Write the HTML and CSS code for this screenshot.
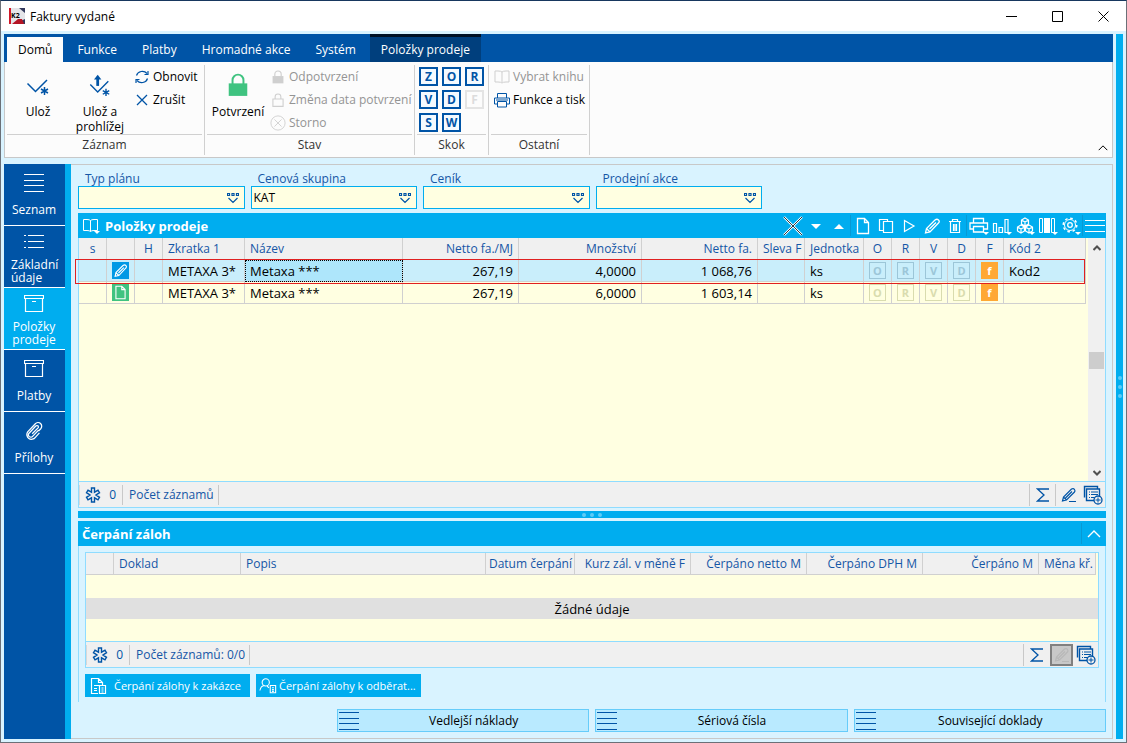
FILE: index.html
```html
<!DOCTYPE html>
<html lang="cs">
<head>
<meta charset="utf-8">
<title>Faktury vydané</title>
<link rel="stylesheet" href="styles.css">
</head>
<body>
<svg class="sprite" aria-hidden="true">
  <symbol id="i-check" viewBox="0 0 24 24"><path d="M1.500 10.500l8 8L21 7" stroke-width="1.500"/><path d="M18.500 14v8M15 16l7 4M22 16l-7 4" stroke-width="1.500"/></symbol>
  <symbol id="i-checkup" viewBox="0 0 24 26"><path d="M1.500 12.500l8 8L21 9M18.500 17v8M15 19l7 4M22 19l-7 4" stroke-width="1.500"/><path d="M9.500 14V5" stroke-width="3"/><path d="M5.500 7l4-5 4 5z" fill="currentColor" stroke="none"/></symbol>
  <symbol id="i-refresh" viewBox="0 0 14 14"><path d="M1.500 5.500a6 5.500 0 0 1 10.500-2M13 1v3.500H9.500M12.500 8.500a6 5.500 0 0 1-10.500 2M1 13V9.500h3.500" stroke-width="1.200"/></symbol>
  <symbol id="i-x" viewBox="0 0 14 14"><path d="M2 2l10 10M12 2L2 12" stroke-width="1.300"/></symbol>
  <symbol id="i-lock" viewBox="0 0 20 22"><path d="M5 10V6.500a5 5 0 0 1 10 0V10" stroke-width="1.800"/><path d="M1.500 9.500h17V21h-17z" fill="currentColor" stroke="none"/></symbol>
  <symbol id="i-lockopen" viewBox="0 0 20 22"><path d="M5.500 9V6a4.500 4.500 0 0 1 9 0v3M2 9.500h16V21H2z" stroke-width="1.700"/></symbol>
  <symbol id="i-cancel" viewBox="0 0 18 18"><circle cx="9" cy="9" r="8"/><path d="M5 5l8 8M13 5l-8 8"/></symbol>
  <symbol id="i-book" viewBox="0 0 16 16"><path d="M8 3v10M8 3Q7 2 4 2H1v11h3q3 0 4 1 1-1 4-1h3V2h-3Q9 2 8 3z"/></symbol>
  <symbol id="i-bookmenu" viewBox="0 0 18 18"><path d="M8.500 3.500v11M8.500 3.500Q7.500 2.500 5 2.500H1.500v11H5q2.500 0 3.500 1 1-1 3.500-1h3.500v-11H12q-2.500 0-3.500 1z"/><path d="M12 14h6l-3 3z" fill="currentColor" stroke="none"/></symbol>
  <symbol id="i-printer" viewBox="0 0 18 16"><path d="M4.500 6V1.500h9V6M4.500 12H1.500V6h15v6h-3M4.500 9.500h9V15h-9zM3 8h12"/></symbol>
  <symbol id="i-list" viewBox="0 0 20 18"><path d="M0 .5h20M0 6.500h20M0 11.500h20M0 17.500h20"/></symbol>
  <symbol id="i-bullets" viewBox="0 0 20 18"><path d="M4 2.500h16M4 8.500h16M4 14.500h16M0 2.500h2M0 8.500h2M0 14.500h2"/></symbol>
  <symbol id="i-box" viewBox="0 0 20 18"><path d="M.5.500h19v3H.5zM1.500 4v12.500h17V4M8 6.500h4" stroke-width="1.200"/></symbol>
  <symbol id="i-clip" viewBox="0 0 20 20"><path d="M15 9l-6.500 7a2.500 2.500 0 0 1-4-3.500L12 4.500a1.500 1.500 0 0 1 2.500 2L8 13M16 12l-4.500 5A5 5 0 0 1 3 11l8.500-9a4 4 0 0 1 6 5.500L15 10" stroke-width="1.400"/></symbol>
  <symbol id="i-drop" viewBox="0 0 12 11"><path d="M.5.500h2v2h-2zM5 .5h2v2H5zM9.500.500h2v2h-2zM1.500 5L6 9.500 10.500 5" stroke-width="1.200"/></symbol>
  <symbol id="i-page" viewBox="0 0 16 18"><path d="M2.500 1.500h7l4 4v11h-11zM9.500 1.500v4h4" stroke-width="1.300"/></symbol>
  <symbol id="i-copy" viewBox="0 0 16 18"><path d="M5.500 4.500h9v11h-9zM5.500 13.500H1.500v-11H9.500v2" stroke-width="1.200"/></symbol>
  <symbol id="i-play" viewBox="0 0 16 18"><path d="M3.500 3.500l9.500 5.500-9.500 5.500z" stroke-width="1.200"/></symbol>
  <symbol id="i-pencil" viewBox="0 0 16 18"><path d="M1.500 16l1-4.500L11 3q2-1.500 3.500 0t0 3L6 15zM2.500 11.500L6 15M5.500 12L12 5.500" stroke-width="1.300"/></symbol>
  <symbol id="i-trash" viewBox="0 0 16 18"><path d="M2 4.500h12M5.500 4V2.500h5V4M3.500 5v10.500h9V5M6.500 7v7M8 7v7M9.500 7v7" stroke-width="1.200"/></symbol>
  <symbol id="i-toolprint" viewBox="0 0 20 20"><path d="M4.500 7V2.500h10V7M4.500 13H1V7h17.500v6h-4M4.500 10.500h10V16h-10z" stroke-width="1.300"/><path d="M14 16h6l-3 3z" fill="currentColor" stroke="none"/></symbol>
  <symbol id="i-chart" viewBox="0 0 20 20"><path d="M1.500 7.500h3v9h-3zM7 11.500h3.500v5H7zM13 3.500h3v13h-3z" stroke-width="1.200"/><path d="M14 16h6l-3 3z" fill="currentColor" stroke="none"/></symbol>
  <symbol id="i-cubes" viewBox="0 0 20 20"><path d="M10 2l3.500 2v4L10 10 6.500 8V4zM6 9l3.500 2v4L6 17l-3.500-2v-4zM14 9l3.500 2v4L14 17l-3.500-2v-4zM6.500 4L10 6l3.500-2M10 6v4M2.500 11L6 13l3.500-2M6 13v4M10.500 11l3.500 2 3.500-2M14 13v4" stroke-width="1.200"/><path d="M14 16h6l-3 3z" fill="currentColor" stroke="none"/></symbol>
  <symbol id="i-cols" viewBox="0 0 20 20"><path d="M1.500 2.500h3v14h-3zM13.500 2.500h3v14h-3z"/><path d="M6 2h6v15H6zM14 16h6l-3 3z" fill="currentColor" stroke="none"/></symbol>
  <symbol id="i-gear" viewBox="0 0 20 20"><circle cx="9" cy="9" r="5.500"/><circle cx="9" cy="9" r="2.300" stroke-width="1.300"/><circle cx="9" cy="9" r="6.800" stroke-dasharray="2.600 2.740" stroke-width="1.500"/><path d="M14 16h6l-3 3z" fill="currentColor" stroke="none"/></symbol>
  <symbol id="i-menu" viewBox="0 0 20 20"><path d="M0 4.500h20M0 9.500h20M0 15.500h20"/></symbol>
  <symbol id="i-ast" viewBox="0 0 16 16"><path d="M6.500 1h3v4.200L13 3.200l1.500 2.500L11 8l3.500 2.300-1.500 2.500-3.500-2V15h-3v-4.200L3 12.800l-1.500-2.500L5 8 1.500 5.700 3 3.200l3.500 2z" stroke-width="1.400"/></symbol>
  <symbol id="i-sum" viewBox="0 0 14 14"><path d="M13 1H1.500L8 7l-6.500 6H13" stroke-width="1.300"/></symbol>
  <symbol id="i-edit" viewBox="0 0 16 16"><path d="M1.500 14l1-4L10.500 2q2-1 3 .5t0 2.500L5.500 13zM2.500 10l3 3M4.500 11L11 4.500M8 14.500h7" stroke-width="1.200"/></symbol>
  <symbol id="i-addlist" viewBox="0 0 20 20"><path d="M3.500 4h13v11.500h-13zM1.500 12.500v-11h13v2" stroke-width="1.400"/><path d="M6 7h1M8 7h7M6 9.500h1M8 9.500h7M6 12.500h1M8 12.500h4"/><circle cx="15" cy="15" r="4" fill="#f0f0f0" stroke-width="1.300"/><path d="M15 12.500v5M12.500 15h5"/></symbol>
  <symbol id="i-up" viewBox="0 0 14 8"><path d="M1 7l6-6 6 6" stroke-width="1.400"/></symbol>
  <symbol id="i-doccalc" viewBox="0 0 18 18"><path d="M8 16.500H1.500v-15h7l4 4V8M8.500 1.500v4h4M4 8.500h5M4 11.500h3M4 13.500h3M9.500 8.500h6v8h-6zM11.500 11h2M11.500 13h2M11.500 15h2" stroke-width="1.200"/></symbol>
  <symbol id="i-person" viewBox="0 0 20 18"><circle cx="7.500" cy="5" r="4" stroke-width="1.200"/><path d="M1 14q1-5 5-5.500M9 9l2 2M12.500 8.500h6v8h-6zM14.500 11h2M14.500 13h2M14.500 15h2" stroke-width="1.200"/></symbol>
</svg>

<div class="window">
  <header class="titlebar">
    <svg class="logo" viewBox="0 0 16 16" aria-hidden="true"><path d="M0 0h16v16H0z" fill="#e4e4e8"/><path d="M0 0h2v16H0z" fill="#d01828"/><path d="M10 0h6v5zM16 11v5H5z" fill="#33395c"/><path d="M3 16l6-5 4 0 2 5z" fill="#b41424"/><text x="2" y="10" font-size="7" font-weight="bold">K2</text></svg>
    <h1>Faktury vydané</h1>
    <div class="winbtns">
      <button aria-label="Minimalizovat"><svg viewBox="0 0 11 11"><path d="M0 5.500h11"/></svg></button>
      <button aria-label="Maximalizovat"><svg viewBox="0 0 11 11"><path d="M.5.500h10v10H.5z"/></svg></button>
      <button aria-label="Zavřít"><svg viewBox="0 0 11 11"><path d="M.5.500l10 10M10.500.500l-10 10"/></svg></button>
    </div>
  </header>

  <div class="frame">
    <div class="content">
      <nav class="tabs">
        <button class="tab active">Domů</button>
        <button class="tab">Funkce</button>
        <button class="tab">Platby</button>
        <button class="tab">Hromadné akce</button>
        <button class="tab">Systém</button>
        <button class="tab context">Položky prodeje</button>
      </nav>
      <section class="ribbon">
        <div class="group g-record">
          <div class="tools">
            <button class="big"><svg class="s24 blue"><use href="#i-check"/></svg><span>Ulož</span></button>
            <button class="big"><svg class="s24 blue"><use href="#i-checkup"/></svg><span>Ulož a prohlížej</span></button>
            <div class="stack">
              <button class="small"><svg class="blue"><use href="#i-refresh"/></svg>Obnovit</button>
              <button class="small"><svg class="blue"><use href="#i-x"/></svg>Zrušit</button>
            </div>
          </div>
          <div class="caption">Záznam</div>
        </div>
        <div class="group g-state">
          <div class="tools">
            <button class="big"><svg class="s24 green"><use href="#i-lock"/></svg><span>Potvrzení</span></button>
            <div class="stack">
              <button class="small" disabled><svg><use href="#i-lock"/></svg>Odpotvrzení</button>
              <button class="small" disabled><svg><use href="#i-lockopen"/></svg>Změna data potvrzení</button>
              <button class="small" disabled><svg class="wide"><use href="#i-cancel"/></svg>Storno</button>
            </div>
          </div>
          <div class="caption">Stav</div>
        </div>
        <div class="group g-jump">
          <div class="tools jumps">
            <button>Z</button><button>O</button><button>R</button>
            <button>V</button><button>D</button><button disabled>F</button>
            <button>S</button><button>W</button>
          </div>
          <div class="caption">Skok</div>
        </div>
        <div class="group g-other">
          <div class="tools">
            <div class="stack">
              <button class="small" disabled><svg class="wide"><use href="#i-book"/></svg>Vybrat knihu</button>
              <button class="small"><svg class="wide blue"><use href="#i-printer"/></svg>Funkce a tisk</button>
            </div>
          </div>
          <div class="caption">Ostatní</div>
        </div>
        <button class="collapse" aria-label="Sbalit"><svg><use href="#i-up"/></svg></button>
      </section>

      <div class="work">
        <nav class="side">
          <button><svg class="i20"><use href="#i-list"/></svg><span>Seznam</span></button>
          <button class="two"><svg class="i20"><use href="#i-bullets"/></svg><span class="left">Základní údaje</span></button>
          <button class="two active"><svg class="i20"><use href="#i-box"/></svg><span>Položky prodeje</span></button>
          <button><svg class="i20"><use href="#i-box"/></svg><span>Platby</span></button>
          <button><svg class="i20"><use href="#i-clip"/></svg><span>Přílohy</span></button>
        </nav>

        <main class="pane">
          <form class="filters">
            <div class="field"><label for="f1">Typ plánu</label><div class="lookup"><input id="f1"><button type="button" aria-label="Vybrat"><svg><use href="#i-drop"/></svg></button></div></div>
            <div class="field"><label for="f2">Cenová skupina</label><div class="lookup"><input id="f2" value="KAT"><button type="button" aria-label="Vybrat"><svg><use href="#i-drop"/></svg></button></div></div>
            <div class="field"><label for="f3">Ceník</label><div class="lookup"><input id="f3"><button type="button" aria-label="Vybrat"><svg><use href="#i-drop"/></svg></button></div></div>
            <div class="field"><label for="f4">Prodejní akce</label><div class="lookup"><input id="f4"><button type="button" aria-label="Vybrat"><svg><use href="#i-drop"/></svg></button></div></div>
          </form>

          <section class="items">
            <div class="bar">
              <svg class="i18"><use href="#i-bookmenu"/></svg>
              <h2>Položky prodeje</h2>
              <div class="toolbar">
                <button aria-label="Zrušit"><svg viewBox="0 0 20 20"><path d="M1 1l18 18M19 1L1 19" stroke-width="2.400"/><path class="ink" d="M1 1l18 18M19 1L1 19"/></svg></button>
                <button aria-label="Dolů"><svg class="s10" viewBox="0 0 10 10"><path d="M0 3h10L5 8z" fill="currentColor" stroke="none"/></svg></button>
                <button aria-label="Nahoru"><svg class="s10" viewBox="0 0 10 10"><path d="M0 8h10L5 3z" fill="currentColor" stroke="none"/></svg></button>
                <button class="sep" aria-label="Nový"><svg class="s16"><use href="#i-page"/></svg></button>
                <button aria-label="Kopie"><svg class="s16"><use href="#i-copy"/></svg></button>
                <button aria-label="Spustit"><svg class="s16"><use href="#i-play"/></svg></button>
                <button aria-label="Změna"><svg class="s16"><use href="#i-pencil"/></svg></button>
                <button aria-label="Smazat"><svg class="s16"><use href="#i-trash"/></svg></button>
                <button class="sep" aria-label="Tisk"><svg><use href="#i-toolprint"/></svg></button>
                <button aria-label="Graf"><svg><use href="#i-chart"/></svg></button>
                <button aria-label="Kostky"><svg><use href="#i-cubes"/></svg></button>
                <button aria-label="Sloupce"><svg><use href="#i-cols"/></svg></button>
                <button aria-label="Nastavení"><svg><use href="#i-gear"/></svg></button>
                <button class="sep" aria-label="Nabídka"><svg><use href="#i-menu"/></svg></button>
              </div>
            </div>
            <div class="gridbox">
              <div class="sheet">
                <table class="grid">
                  <colgroup><col class="c28"><col class="c28"><col class="c28"><col class="c82"><col><col class="c116"><col class="c123"><col class="c116"><col class="c47"><col class="c59"><col class="c28"><col class="c28"><col class="c28"><col class="c28"><col class="c28"><col class="c82"></colgroup>
                  <thead><tr><th class="c">s</th><th></th><th class="c">H</th><th>Zkratka 1</th><th>Název</th><th class="r">Netto fa./MJ</th><th class="r">Množství</th><th class="r">Netto fa.</th><th>Sleva F</th><th>Jednotka</th><th class="c">O</th><th class="c">R</th><th class="c">V</th><th class="c">D</th><th class="c">F</th><th>Kód 2</th></tr></thead>
                  <tbody>
                    <tr class="sel"><td></td><td class="c"><span class="mark edit"><svg><use href="#i-pencil"/></svg></span></td><td></td><td>METAXA 3*</td><td class="focus">Metaxa ***</td><td class="r">267,19</td><td class="r">4,0000</td><td class="r">1 068,76</td><td></td><td>ks</td><td class="c"><b class="flag">O</b></td><td class="c"><b class="flag">R</b></td><td class="c"><b class="flag">V</b></td><td class="c"><b class="flag">D</b></td><td class="c"><b class="flag on">f</b></td><td>Kod2</td></tr>
                    <tr><td></td><td class="c"><span class="mark new"><svg><use href="#i-page"/></svg></span></td><td></td><td>METAXA 3*</td><td>Metaxa ***</td><td class="r">267,19</td><td class="r">6,0000</td><td class="r">1 603,14</td><td></td><td>ks</td><td class="c"><b class="flag">O</b></td><td class="c"><b class="flag">R</b></td><td class="c"><b class="flag">V</b></td><td class="c"><b class="flag">D</b></td><td class="c"><b class="flag on">f</b></td><td></td></tr>
                  </tbody>
                </table>
                <div class="outline"></div>
              </div>
              <div class="scroll">
                <svg viewBox="0 0 8 6"><path d="M.5 5L4 1.500 7.500 5" stroke-width="2"/></svg>
                <span class="thumb"></span>
                <svg viewBox="0 0 8 6"><path d="M.5 1L4 4.500 7.500 1" stroke-width="2"/></svg>
              </div>
            </div>
            <div class="status">
              <span class="cell count"><svg><use href="#i-ast"/></svg>0</span>
              <span class="cell">Počet záznamů</span>
              <span class="actions">
                <button aria-label="Součet"><svg class="s14"><use href="#i-sum"/></svg></button>
                <button class="line" aria-label="Upravit"><svg><use href="#i-edit"/></svg></button>
                <button aria-label="Přidat"><svg class="s20"><use href="#i-addlist"/></svg></button>
              </span>
            </div>
          </section>

          <div class="splitter"><i></i><i></i><i></i></div>

          <section class="advances">
            <div class="bar">
              <h2>Čerpání záloh</h2>
              <button class="fold" aria-label="Sbalit"><svg><use href="#i-up"/></svg></button>
            </div>
            <div class="inner">
              <div class="box">
                <table class="grid">
                  <colgroup><col class="c28"><col class="c127"><col><col class="c89"><col class="c116"><col class="c116"><col class="c116"><col class="c116"><col class="c57"></colgroup>
                  <thead><tr><th></th><th>Doklad</th><th>Popis</th><th class="r tight">Datum čerpání</th><th class="r">Kurz zál. v měně F</th><th class="r">Čerpáno netto M</th><th class="r">Čerpáno DPH M</th><th class="r">Čerpáno M</th><th class="r tight">Měna kř.</th></tr></thead>
                </table>
                <div class="empty">Žádné údaje</div>
                <div class="status">
                  <span class="cell count"><svg><use href="#i-ast"/></svg>0</span>
                  <span class="cell">Počet záznamů: 0/0</span>
                  <span class="actions">
                    <button aria-label="Součet"><svg class="s14"><use href="#i-sum"/></svg></button>
                    <button class="line off" disabled aria-label="Upravit"><svg><use href="#i-edit"/></svg></button>
                    <button aria-label="Přidat"><svg class="s20"><use href="#i-addlist"/></svg></button>
                  </span>
                </div>
              </div>
              <div class="draw">
                <button class="wider"><svg><use href="#i-doccalc"/></svg>Čerpání zálohy k zakázce</button>
                <button><svg><use href="#i-person"/></svg>Čerpání zálohy k odběrat...</button>
              </div>
            </div>
          </section>

          <div class="links">
            <button><svg><use href="#i-list"/></svg><span>Vedlejší náklady</span></button>
            <button><svg><use href="#i-list"/></svg><span>Sériová čísla</span></button>
            <button><svg><use href="#i-list"/></svg><span>Související doklady</span></button>
          </div>
        </main>
      </div>
    </div>
    <aside class="edge"><i></i><i></i><i></i></aside>
  </div>
</div>
</body>
</html>
```

FILE: styles.css
```css
* { box-sizing: border-box; }
body { margin: 0; font: 12px/15px "Open Sans", "Noto Sans", sans-serif; color: #000; }
h1, h2 { margin: 0; font-size: inherit; }
button, input { font: inherit; color: inherit; margin: 0; padding: 0; border: 0; background: none; }
svg { fill: none; stroke: currentColor; flex: none; }
.sprite { position: absolute; width: 0; height: 0; }

.window { height: 100vh; min-height: 600px; display: flex; flex-direction: column; background: #d9f3ff; border: 1px solid #6b7078; border-top-color: #17375e; }
.titlebar { height: 30px; flex: none; display: flex; align-items: center; background: #fff; padding-left: 8px; }
.logo { width: 16px; height: 16px; stroke: none; }
.logo text { fill: #000; font-family: "Open Sans", sans-serif; }
h1 { font-weight: 400; margin-left: 5px; }
.winbtns { margin-left: auto; display: flex; }
.winbtns button { width: 46px; height: 28px; display: flex; align-items: center; justify-content: center; }
.winbtns svg { width: 11px; height: 11px; }

.frame { flex: 1; min-height: 0; display: flex; gap: 3px; padding: 3px; }
.content { flex: 1; min-width: 0; display: flex; flex-direction: column; }
.edge { width: 7px; flex: none; background: #00adef; display: flex; flex-direction: column; align-items: center; justify-content: center; gap: 5px; }
.edge i, .splitter i { width: 4px; height: 4px; border-radius: 2px; background: #5ccbf7; }

.tabs { height: 28px; flex: none; display: flex; gap: 3px; background: #0054a6; color: #fff; padding-left: 3px; }
.tab { padding: 3px 11px 0; }
.tab.active { margin-top: 3px; padding: 0 11px; background: #fcfcfc; color: #000; }
.tab.context { padding-top: 0; background: #003f7d; border-top: 3px solid #001226; }

.ribbon { height: 96px; flex: none; position: relative; display: flex; background: #fcfcfc; border: 1px solid #c8c8c8; border-top: 0; }
.group { display: flex; flex-direction: column; margin: 3px 0 2px; padding: 0 2px; border-right: 1px solid #d0d0d0; }
.g-record { width: 200px; }
.g-state { width: 210px; }
.g-jump { width: 74px; }
.g-other { width: 101px; }
.tools { flex: 1; display: flex; border-bottom: 1px solid #d0d0d0; }
.caption { height: 20px; line-height: 20px; text-align: center; color: #333; }
.big { width: 62px; display: flex; flex-direction: column; align-items: center; padding-top: 8px; gap: 7px; }
.big span { width: 62px; }
.s24 { width: 24px; height: 24px; }
.blue { color: #0054a6; }
.green { color: #3fc380; }
.stack { display: flex; flex-direction: column; margin-left: 4px; }
.small { height: 23px; display: flex; align-items: center; gap: 4px; white-space: nowrap; }
.small svg { width: 14px; height: 14px; }
.small svg.wide { width: 18px; height: 16px; margin: 0 -2px; }
.small:disabled { color: #949494; }
.small:disabled svg { color: #cfcfcf; }
.g-state .stack { margin-left: 2px; }
.jumps { display: grid; grid-template-columns: repeat(3, 19px); grid-auto-rows: 19px; gap: 4px; padding: 2px; align-content: start; }
.jumps button { border: 2px solid #0054a6; background: #f4faff; color: #0054a6; font-weight: 700; line-height: 15px; }
.jumps button:disabled { border-color: #e4e4e4; background: none; color: #dcdcdc; }
.collapse { position: absolute; right: 4px; bottom: 6px; width: 10px; height: 12px; }
.collapse svg { width: 10px; height: 6px; }

.work { flex: 1; min-height: 0; display: flex; margin-top: 6px; }
.side { width: 67px; flex: none; background: #0054a6; border-right: 6px solid #00adef; color: #fff; }
.side button { width: 61px; height: 62px; border-bottom: 1px solid #fff; display: flex; flex-direction: column; align-items: center; justify-content: space-between; padding: 10px 1px 9px 0; line-height: 13px; }
.side button.active { background: #00adef; }
.side .left { text-align: left; padding-left: 7px; }
.side .two { padding: 7px 1px 3px 0; }
.i20 { width: 20px; height: 18px; }

.pane { flex: 1; min-width: 0; display: flex; flex-direction: column; border: 1px solid #c8c8c8; border-left: 0; padding: 7px 6px 6px 7px; }
.filters { width: 684px; display: grid; grid-template-columns: repeat(4, minmax(0, 1fr)); gap: 6px; margin-bottom: 4px; }
.field label { display: block; padding-left: 7px; height: 14px; line-height: 14px; color: #1556a6; }
.lookup { height: 23px; display: flex; align-items: center; background: #ffffe1; border: 1px solid #00adef; }
.lookup input { flex: 1; min-width: 0; padding-left: 2px; }
.lookup button { width: 22px; height: 18px; color: #0054a6; }
.lookup svg { width: 12px; height: 11px; vertical-align: middle; }

.bar { height: 25px; flex: none; display: flex; align-items: center; background: #00adef; color: #fff; padding-left: 4px; }
h2 { font-size: 13px; font-weight: 700; line-height: 17px; padding-top: 1px; }
.i18 { width: 18px; height: 18px; margin-right: 5px; }
.toolbar { margin-left: auto; display: flex; }
.toolbar button { width: 23px; height: 21px; display: flex; align-items: center; justify-content: center; }
.toolbar .sep { width: 24px; border-left: 1px solid #0899d4; }
.toolbar svg { width: 20px; height: 20px; }
.toolbar .s16 { width: 16px; height: 18px; }
.toolbar .s10 { width: 10px; height: 10px; }
.ink { stroke: #2c3a44; }

.items { flex: 1; min-height: 0; display: flex; flex-direction: column; }
.gridbox { flex: 1; min-height: 0; display: flex; background: #ffffe1; border: 1px solid #8fdcff; border-top: 0; }
.sheet { flex: 1; min-width: 0; position: relative; padding-right: 2px; }
.grid { width: 100%; table-layout: fixed; border-collapse: separate; border-spacing: 0; font-size: 13px; }
.grid th, .grid td { height: 22px; padding: 0 5px; text-align: left; white-space: nowrap; overflow: hidden; border-right: 1px solid #d0d0d0; border-bottom: 1px solid #d0d0d0; font-weight: 400; line-height: 20px; }
.grid th { background: #f0f0f0; color: #1556a6; font-size: 12px; }
.grid .c { text-align: center; padding: 0; }
.grid .r { text-align: right; }
.grid .tight { padding: 0 2px; }
.sel td { background: #c9eefb; }
.grid td.focus { background: #aee6fb; outline: 1px dotted #000; outline-offset: -1px; }
.c28 { width: 28px; } .c47 { width: 47px; } .c57 { width: 57px; } .c59 { width: 59px; }
.c82 { width: 82px; } .c89 { width: 89px; } .c116 { width: 116px; } .c123 { width: 123px; } .c127 { width: 127px; }
.outline { position: absolute; left: -4px; right: 3px; top: 21px; height: 25px; border: 1px solid #e02020; }
.mark { display: block; width: 17px; height: 17px; margin: 0 auto; color: #fff; }
.mark svg { display: block; width: 17px; height: 17px; padding: 1px; }
.edit { background: #0099e5; }
.new { background: #3fc380; }
.flag { display: block; width: 17px; height: 17px; margin: 0 auto; border: 1px solid #d9dcae; color: #d9dcae; font-size: 11px; line-height: 15px; }
.sel .flag { border-color: #9cc6d8; color: #9cc6d8; }
.flag.on, .sel .flag.on { background: #ffa834; border-color: #ffa834; color: #fff; }
.scroll { width: 17px; flex: none; display: flex; flex-direction: column; align-items: center; justify-content: space-between; padding: 7px 0 5px; background: #f0f0f0; color: #505050; }
.scroll svg { width: 8px; height: 6px; }
.thumb { width: 15px; height: 17px; background: #cdcdcd; }

.status { height: 26px; flex: none; display: flex; align-items: center; background: #f0f0f0; border: 1px solid #8fdcff; border-top: 0; color: #1556a6; }
.cell { height: 20px; line-height: 20px; padding: 0 4px 0 6px; border-right: 1px solid #c8c8c8; }
.count { width: 44px; display: flex; align-items: center; justify-content: space-between; border-left: 1px solid #d8d8d8; padding: 0 6px 0 5px; color: #0054a6; }
.count svg { width: 16px; height: 16px; }
.actions { margin-left: auto; display: flex; color: #0054a6; }
.actions button { width: 24px; height: 22px; display: flex; align-items: center; justify-content: center; }
.actions button:first-child, .actions .line { width: 26px; border-left: 1px solid #c8c8c8; }
.actions svg { width: 16px; height: 16px; }
.actions .s14 { width: 14px; height: 14px; }
.actions .s20 { width: 20px; height: 20px; }
.actions .off { width: 23px; margin: 0 1px; border: 2px solid #808080; background: #c8c8c8; color: #b8b8b8; }

.splitter { height: 7px; flex: none; margin: 3px 0; background: #00adef; display: flex; align-items: center; justify-content: center; gap: 4px; }
.advances .bar { padding-right: 1px; }
.fold { margin-left: auto; width: 24px; height: 21px; border-left: 1px solid #0899d4; }
.fold svg { width: 14px; height: 8px; }
.inner { padding: 6px 6px 5px; border: 1px solid #8fdcff; border-width: 0 1px; }
.box { border: 1px solid #8fdcff; background: #ffffe1; }
.box .grid { padding-right: 2px; }
.empty { margin: 23px 0 22px; height: 21px; line-height: 22px; background: #e0e0e0; text-align: center; font-size: 13px; }
.box .status { border: 0; border-top: 1px solid #8fdcff; }
.draw { display: flex; gap: 6px; margin-top: 6px; color: #fff; font-size: 11px; }
.draw button { width: 165px; height: 23px; display: flex; align-items: center; gap: 2px; padding-left: 3px; background: #00adef; white-space: nowrap; }
.draw .wider { gap: 6px; padding-left: 5px; }
.draw svg { width: 18px; height: 18px; }
.links { display: grid; grid-template-columns: repeat(3, 1fr); gap: 6px; margin: 7px 0 0 259px; }
.links button { height: 23px; display: flex; align-items: center; padding-left: 1px; background: #b9eaff; border: 1px solid #66ccfa; }
.links svg { width: 20px; height: 18px; color: #0054a6; }
.links span { flex: 1; }
```
